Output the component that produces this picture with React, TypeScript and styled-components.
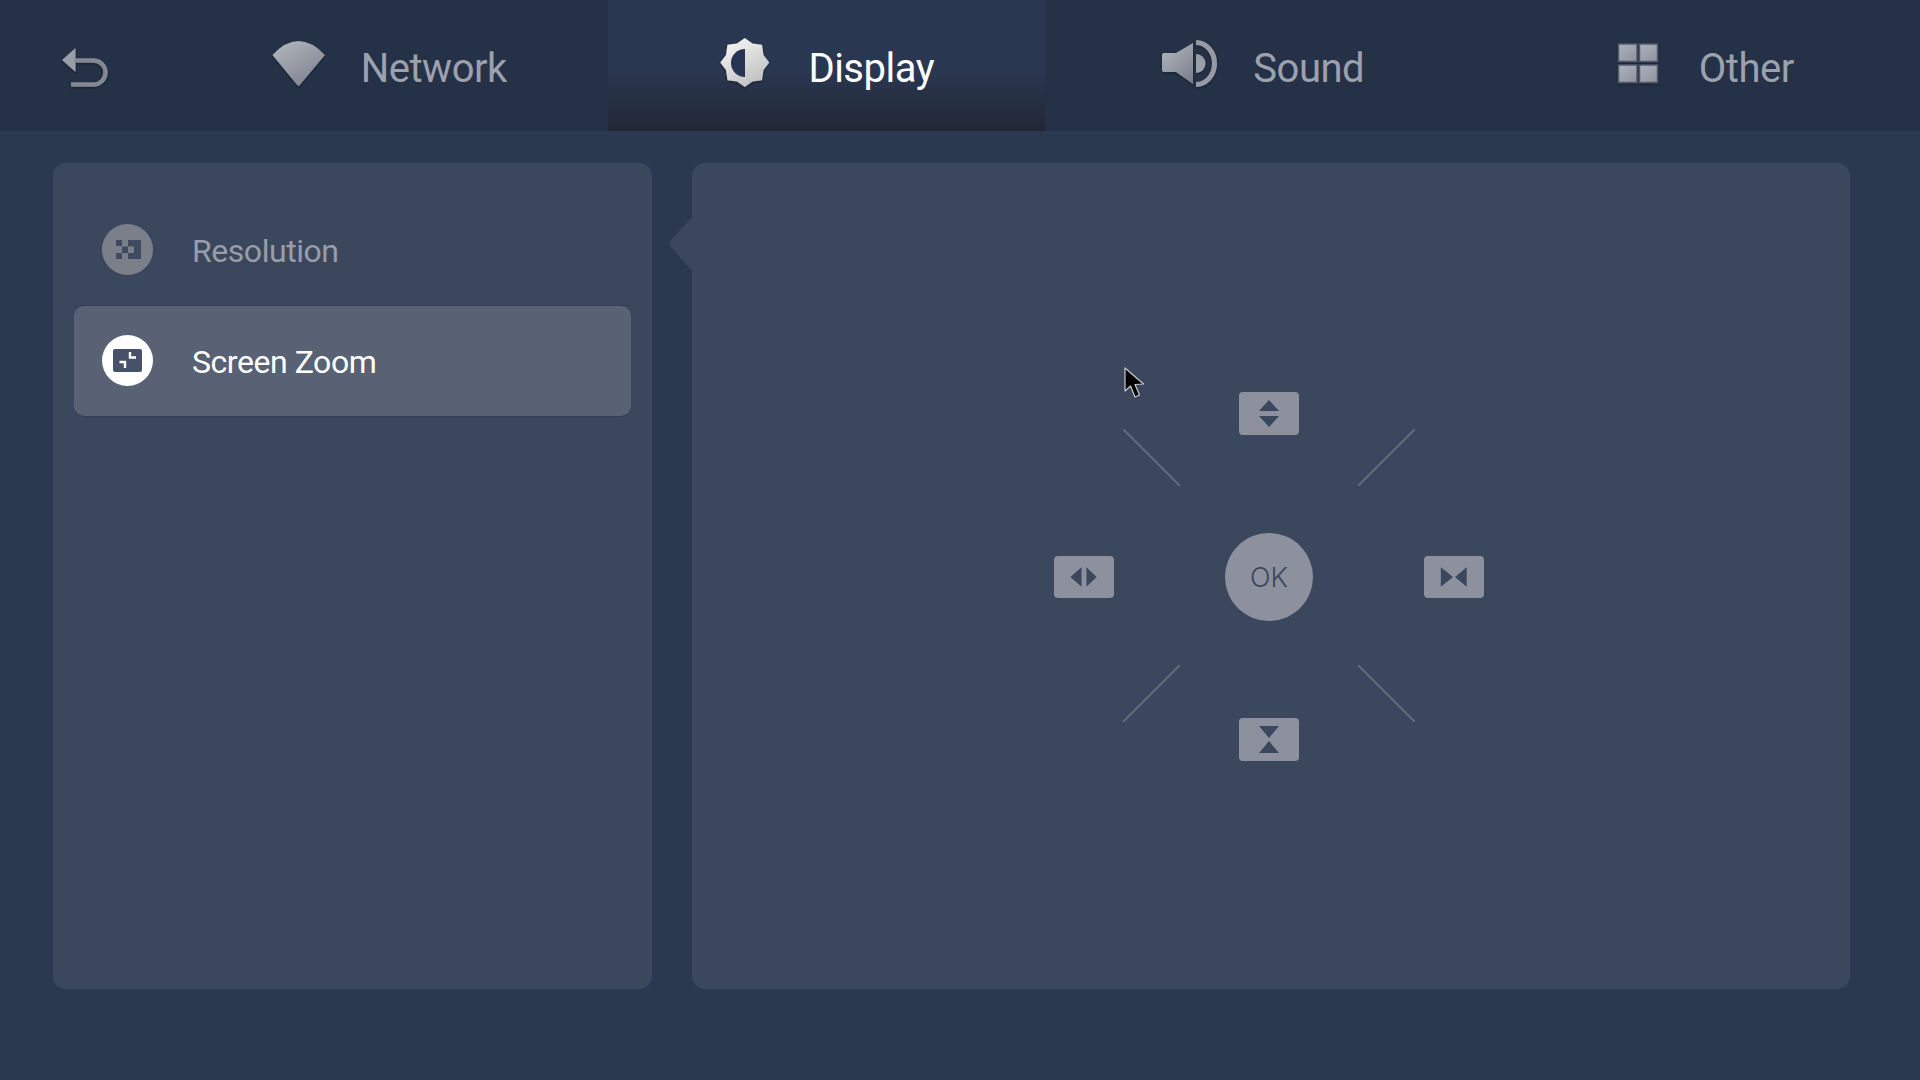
import React from 'react'
import styled, { createGlobalStyle } from 'styled-components'

const GlobalStyle = createGlobalStyle`
  html, body {
    margin: 0;
    padding: 0;
    background: #2b3950;
    font-family: Roboto, 'Liberation Sans', sans-serif;
  }
  * {
    box-sizing: border-box;
  }
`

const Defs = () => (
  <svg width="0" height="0" style={{ position: 'absolute' }}>
    <defs>
      <linearGradient id="grey" x1="0.1" y1="0" x2="0.8" y2="1">
        <stop offset="0" stopColor="#b2b6bf" />
        <stop offset="1" stopColor="#7d818b" />
      </linearGradient>
      <linearGradient id="tile" x1="0.1" y1="0" x2="0.9" y2="1">
        <stop offset="0" stopColor="#adb1bb" />
        <stop offset="1" stopColor="#8f939d" />
      </linearGradient>
      <linearGradient id="light" x1="0.2" y1="0" x2="0.8" y2="1">
        <stop offset="0" stopColor="#f6f6f6" />
        <stop offset="1" stopColor="#bcbcbc" />
      </linearGradient>
      <filter id="drop" x="-20%" y="-20%" width="140%" height="140%">
        <feDropShadow dx="0" dy="1" stdDeviation="1.1" floodColor="#141a28" floodOpacity="0.75" />
      </filter>
    </defs>
  </svg>
)

const BackIcon = () => (
  <TabIcon viewBox="0 0 57 57">
    <g filter="url(#drop)">
      <path d="M5 23 18.5 11V35Z" fill="#9a9ea8" />
      <path d="M17.5 23.5H36.5A12 12 0 0 1 36.5 47.5H14" fill="none" stroke="#848892" strokeWidth="4.5" />
    </g>
  </TabIcon>
)

const WifiIcon = () => (
  <TabIcon viewBox="0 0 57 57">
    <path
      d="M1.5 18Q27.3 -10 54 18L28.8 48Q27.5 50 26.2 48Z"
      fill="url(#grey)"
      filter="url(#drop)"
    />
  </TabIcon>
)

const BrightnessIcon = () => (
  <TabIcon viewBox="0 0 57 57">
    <polygon
      points="51.3,25.5 45.5,33 44,43.2 34.5,44.5 26.8,50 19,44.5 9.5,43.2 8,33 2.3,25.5 8,18 9.5,7.8 19,6.5 26.8,1 34.5,6.5 44,7.8 45.5,18"
      fill="url(#light)"
      filter="url(#drop)"
    />
    <path d="M27 12A14 14 0 0 0 27 40Z" fill="#263552" />
  </TabIcon>
)

const SpeakerIcon = () => (
  <TabIcon viewBox="0 0 57 57">
    <g filter="url(#drop)">
      <path d="M-1 18Q-1 16 1 16H13L30 6V47L13 35H1Q-1 35 -1 33Z" fill="url(#grey)" />
      <path d="M33 17A9.5 9.5 0 0 1 33 36Z" fill="#9a9ea8" />
      <path d="M33 5.5A18.5 21 0 0 1 33 47.5" fill="none" stroke="#969aa4" strokeWidth="5" />
    </g>
  </TabIcon>
)

const GridIcon = () => (
  <TabIcon viewBox="0 0 57 57">
    <g filter="url(#drop)" fill="url(#tile)" stroke="#4f5a6c" strokeWidth="1.5">
      <rect x="9.5" y="7" width="18.5" height="17.5" />
      <rect x="30.5" y="7" width="18" height="17.5" />
      <rect x="9.5" y="28" width="18.5" height="17.5" />
      <rect x="30.5" y="28" width="18" height="17.5" />
    </g>
  </TabIcon>
)

const ResolutionGlyph = () => (
  <svg width="51" height="51" viewBox="0 0 51 51">
    <g fill="#3f4a60">
      <rect x="14" y="16" width="6" height="6" />
      <rect x="14" y="29" width="6" height="6" />
      <rect x="20" y="22.5" width="6" height="6.5" />
      <path d="M26 16H39V35H26V29H32V22.5H26Z" />
    </g>
  </svg>
)

const ZoomGlyph = () => (
  <svg width="51" height="51" viewBox="0 0 51 51">
    <rect x="11" y="14" width="29" height="23" rx="2" fill="#46526a" />
    <path d="M28 17V22.5H34M17.5 27H23V33" fill="none" stroke="#fff" strokeWidth="2.4" />
  </svg>
)

const Arrows = ({ kind }: { kind: 'up' | 'left' | 'right' | 'down' }) => (
  <svg width="60" height="100%" viewBox="0 0 60 43">
    <g fill="#3b475d">
      {kind === 'up' && <path d="M20 19 30 8 40 19ZM20 24H40L30 35Z" />}
      {kind === 'down' && <path d="M20 8H40L30 20ZM20 35 30 23 40 35Z" />}
      {kind === 'left' && <path d="M16 21.5 27.5 11.5V31.5ZM32.5 11.5 43 21.5 32.5 31.5Z" />}
      {kind === 'right' && <path d="M16.5 11.5 29 21.5 16.5 31.5ZM43 11.5V31.5L31 21.5Z" />}
    </g>
  </svg>
)

const tabs = [
  { label: 'Network', icon: <WifiIcon /> },
  { label: 'Display', icon: <BrightnessIcon />, active: true },
  { label: 'Sound', icon: <SpeakerIcon /> },
  { label: 'Other', icon: <GridIcon /> },
]

export default function App() {
  return (
    <Page>
      <GlobalStyle />
      <Defs />
      <Header>
        <BackButton>
          <BackIcon />
        </BackButton>
        {tabs.map((tab) => (
          <Tab key={tab.label} $active={tab.active}>
            {tab.icon}
            <TabLabel $active={tab.active}>{tab.label}</TabLabel>
          </Tab>
        ))}
      </Header>
      <Main>
        <Sidebar>
          <MenuItem>
            <MenuIcon $selected={false}>
              <ResolutionGlyph />
            </MenuIcon>
            <MenuLabel $selected={false}>Resolution</MenuLabel>
          </MenuItem>
          <MenuItem $selected>
            <MenuIcon $selected>
              <ZoomGlyph />
            </MenuIcon>
            <MenuLabel $selected>Screen Zoom</MenuLabel>
          </MenuItem>
        </Sidebar>
        <Content>
          <Pointer viewBox="0 0 24 56" width="24" height="56">
            <path d="M24 0 1.5 24.5Q0 27.5 1.5 30.5L24 56Z" fill="#3b475d" />
          </Pointer>
          <Cursor viewBox="0 0 22 32" width="22" height="32">
            <path
              d="M1 1V24L6.5 19 11 30 15.5 28 11 17.5 19.5 17Z"
              fill="#000"
              stroke="#c9ccd2"
              strokeWidth="1.2"
              strokeLinejoin="round"
            />
          </Cursor>
          <Pad>
            <Corner $h="end" $v="end">
              <Diagonal x1="0" y1="0" x2="57" y2="57" />
            </Corner>
            <PadCell $h="center" $v="start">
              <PadButton $tall><Arrows kind="up" /></PadButton>
            </PadCell>
            <Corner $h="start" $v="end">
              <Diagonal x1="0" y1="57" x2="57" y2="0" />
            </Corner>
            <PadCell $h="start" $v="center">
              <PadButton><Arrows kind="left" /></PadButton>
            </PadCell>
            <PadCell $h="center" $v="center">
              <OkButton>OK</OkButton>
            </PadCell>
            <PadCell $h="end" $v="center">
              <PadButton><Arrows kind="right" /></PadButton>
            </PadCell>
            <Corner $h="end" $v="start" $lift>
              <Diagonal x1="0" y1="57" x2="57" y2="0" />
            </Corner>
            <PadCell $h="center" $v="end">
              <PadButton $tall><Arrows kind="down" /></PadButton>
            </PadCell>
            <Corner $h="start" $v="start" $lift>
              <Diagonal x1="0" y1="0" x2="57" y2="57" />
            </Corner>
          </Pad>
        </Content>
      </Main>
    </Page>
  )
}

const Diagonal = (props: React.SVGProps<SVGLineElement>) => (
  <svg width="57" height="57" viewBox="0 0 57 57">
    <line {...props} stroke="#626c7c" strokeWidth="2" />
  </svg>
)

const Page = styled.div`
  width: 1920px;
  height: 1080px;
  overflow: hidden;
  background: #2b3950;
  display: flex;
  flex-direction: column;
`

const Header = styled.header`
  height: 131px;
  flex: none;
  display: flex;
  background: #253146;
`

const BackButton = styled.div`
  width: 170px;
  flex: none;
  display: flex;
  align-items: center;
  justify-content: center;
`

const TabIcon = styled.svg`
  width: 57px;
  height: 57px;
  flex: none;
  overflow: visible;
`

const Tab = styled.div<{ $active?: boolean }>`
  flex: 1;
  display: flex;
  align-items: center;
  justify-content: center;
  gap: 33px;
  background: ${({ $active }) =>
    $active ? 'linear-gradient(180deg, #2a3750 0%, #2a3750 55%, #212735 100%)' : 'transparent'};
`

const TabLabel = styled.span<{ $active?: boolean }>`
  margin-top: 5px;
  font-size: 40px;
  line-height: 47px;
  letter-spacing: -0.5px;
  color: ${({ $active }) => ($active ? '#ffffff' : '#9ba1ad')};
`

const Main = styled.main`
  height: 857px;
  padding: 32px 70px 0 53px;
  display: flex;
  gap: 40px;
  align-items: flex-start;
`

const Panel = styled.section`
  height: 826px;
  border-radius: 13px;
  background: #3b475d;
`

const Sidebar = styled(Panel)`
  width: 599px;
  flex: none;
  padding: 32px 21px 0;
`

const MenuItem = styled.div<{ $selected?: boolean }>`
  height: 111px;
  display: flex;
  align-items: center;
  gap: 39px;
  padding-left: 28px;
  border-bottom: 1px solid #333e53;
  background-clip: padding-box;
  border-radius: ${({ $selected }) => ($selected ? '10px' : '0')};
  background-color: ${({ $selected }) => ($selected ? '#586274' : 'transparent')};
`

const MenuIcon = styled.div<{ $selected: boolean }>`
  width: 51px;
  height: 51px;
  flex: none;
  margin-top: -1px;
  border-radius: 50%;
  background: ${({ $selected }) => ($selected ? '#ffffff' : '#7b7f89')};
`

const MenuLabel = styled.span<{ $selected: boolean }>`
  margin-top: 2px;
  font-size: 32px;
  line-height: 38px;
  letter-spacing: -0.45px;
  color: ${({ $selected }) => ($selected ? '#ffffff' : '#989da8')};
`

const Content = styled(Panel)`
  position: relative;
  width: 1158px;
  flex: none;
  padding: 229px 0 0 362px;
`

const Pointer = styled.svg`
  position: absolute;
  left: -23px;
  top: 53px;
`

const Cursor = styled.svg`
  position: absolute;
  left: 432px;
  top: 204px;
`

const Pad = styled.div`
  width: 430px;
  height: 369px;
  display: grid;
  grid-template-columns: 126px 178px 126px;
  grid-template-rows: 94px 182px 93px;
`

type CellProps = { $h: string; $v: string; $lift?: boolean }

const PadCell = styled.div<CellProps>`
  display: flex;
  justify-content: ${({ $h }) => $h};
  align-items: ${({ $v }) => $v};
`

const Corner = styled(PadCell)`
  margin-top: ${({ $lift }) => ($lift ? '-3px' : '0')};
  svg {
    display: block;
  }
`

const PadButton = styled.div<{ $tall?: boolean }>`
  width: 60px;
  height: ${({ $tall }) => ($tall ? '43px' : '42px')};
  border-radius: 4px;
  background: #8d919e;
  svg {
    display: block;
  }
`

const OkButton = styled.div`
  width: 88px;
  height: 88px;
  border-radius: 50%;
  background: #8d919e;
  color: #3b475d;
  display: flex;
  align-items: center;
  justify-content: center;
  font-family: Inter, Roboto, sans-serif;
  font-weight: 300;
  font-size: 27px;
`
